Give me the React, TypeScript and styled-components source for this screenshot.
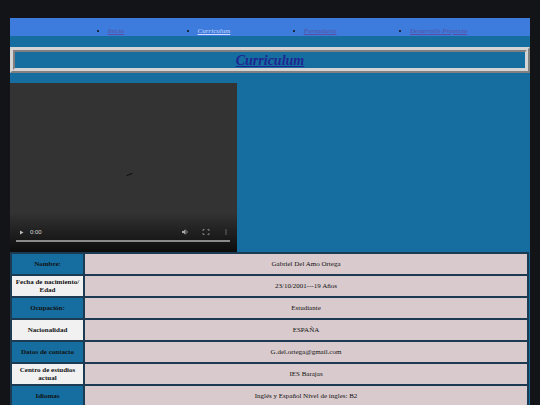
import styled, { createGlobalStyle } from "styled-components"

const GlobalStyle = createGlobalStyle`
    html, body {
        margin: 0;
        padding: 0;
        background: #131417;
        font-family: "Liberation Serif", "Times New Roman", serif;
    }
    body {
        padding: 18px 10px 0 10px;
    }
`

const Page = styled.div`
    width: 520px;
    background: #166ea0;
`

const Nav = styled.ul`
    display: flex;
    justify-content: space-around;
    margin: 0;
    padding: 10px 26px 0 61px;
    height: 18px;
    box-sizing: border-box;
    background: #3d7bdc;
    font-size: 7px;
    line-height: 7px;
    li {
        list-style: disc;
        color: #111;
    }
`

const NavLink = styled.a<{ $current?: boolean }>`
    font-style: italic;
    text-decoration: underline;
    color: ${(p) => (p.$current ? "#cfdcff" : "#5b4f9c")};
`

const TitleBox = styled.div`
    margin: 11px 0 10px 0;
    border: 5px ridge #d4d4d4;
    background: #166ea0;
    text-align: center;
    height: 16px;
    line-height: 16px;
`

const Title = styled.a`
    font-size: 14px;
    font-weight: bold;
    font-style: italic;
    text-decoration: underline;
    color: #1e2590;
`

const Video = styled.div`
    position: relative;
    width: 227px;
    height: 169px;
    background: #333333;
`

const Controls = styled.div`
    position: absolute;
    left: 0;
    right: 0;
    bottom: 0;
    height: 40px;
    background: linear-gradient(180deg, rgba(0, 0, 0, 0) 0%, rgba(0, 0, 0, 0.75) 100%);
`

const ControlRow = styled.div`
    display: flex;
    align-items: center;
    gap: 6px;
    padding: 17px 8px 0 9px;
    color: #d8d8d8;
    font-family: "Liberation Sans", Arial, sans-serif;
    font-size: 6px;
    line-height: 6px;
    svg {
        display: block;
    }
`

const Spacer = styled.div`
    flex: 1;
`

const Progress = styled.div`
    margin: 5px 7px 0 6px;
    height: 2px;
    background: #8a8a8a;
`

const Spinner = styled.svg`
    position: absolute;
    left: 116px;
    top: 90px;
`

const Table = styled.table`
    width: 519px;
    border-collapse: collapse;
    font-size: 7px;
    color: #111;
`

const Label = styled.th<{ $light?: boolean }>`
    width: 73px;
    height: 20px;
    padding: 0 2px;
    box-sizing: border-box;
    border: 2px solid #1c3a52;
    background: ${(p) => (p.$light ? "#f1f1f1" : "#166ea0")};
    font-weight: bold;
    line-height: 8px;
    text-align: center;
`

const Value = styled.td`
    height: 20px;
    padding: 0;
    border: 2px solid #1c3a52;
    background: #d9cbcd;
    text-align: center;
`

const rows = [
    { label: "Nombre:", value: "Gabriel Del Amo Ortega", light: false },
    { label: "Fecha de nacimiento/ Edad", value: "23/10/2001---19 Años", light: true },
    { label: "Ocupación:", value: "Estudiante", light: false },
    { label: "Nacionalidad", value: "ESPAÑA", light: true },
    { label: "Datos de contacto", value: "G.del.ortega@gmail.com", light: false },
    { label: "Centro de estudios actual", value: "IES Barajas", light: true },
    { label: "Idiomas", value: "Inglés y Español Nivel de ingles: B2", light: false },
]

const App = () => {
    return (
        <>
            <GlobalStyle />
            <Page>
                <Nav>
                    <li><NavLink href="#">Inicio</NavLink></li>
                    <li><NavLink href="#" $current>Curriculum</NavLink></li>
                    <li><NavLink href="#">Formulario</NavLink></li>
                    <li><NavLink href="#">Desarrollo Proyecto</NavLink></li>
                </Nav>
                <TitleBox>
                    <Title href="#">Curriculum</Title>
                </TitleBox>
                <Video>
                    <Spinner width="7" height="3" viewBox="0 0 7 3">
                        <path d="M1 2.4 L6 0.6" stroke="#111" strokeWidth="1.1" strokeLinecap="round" />
                    </Spinner>
                    <Controls>
                        <ControlRow>
                            <svg width="5" height="5" viewBox="0 0 5 5">
                                <path d="M1 0.5 L4.5 2.5 L1 4.5 Z" fill="#bbb" />
                            </svg>
                            <span>0:00</span>
                            <Spacer />
                            <svg width="7" height="6" viewBox="0 0 7 6">
                                <path d="M0 2 H1.5 L3.5 0.3 V5.7 L1.5 4 H0 Z" fill="#aaa" />
                                <path d="M4.5 1.5 Q6 3 4.5 4.5" stroke="#aaa" strokeWidth="0.8" fill="none" />
                            </svg>
                            <svg width="14" height="6" viewBox="0 0 14 6" style={{ marginLeft: 4 }}>
                                <path d="M4 2 V0.5 H5.5 M8.5 0.5 H10 V2 M10 4 V5.5 H8.5 M5.5 5.5 H4 V4" stroke="#aaa" strokeWidth="0.7" fill="none" />
                            </svg>
                            <svg width="6" height="6" viewBox="0 0 6 6" style={{ marginLeft: 4 }}>
                                <circle cx="3" cy="1" r="0.55" fill="#bbb" />
                                <circle cx="3" cy="3" r="0.55" fill="#bbb" />
                                <circle cx="3" cy="5" r="0.55" fill="#bbb" />
                            </svg>
                        </ControlRow>
                        <Progress />
                    </Controls>
                </Video>
                <Table>
                    <tbody>
                        {rows.map((r) => (
                            <tr key={r.label}>
                                <Label $light={r.light}>{r.label}</Label>
                                <Value>{r.value}</Value>
                            </tr>
                        ))}
                    </tbody>
                </Table>
            </Page>
        </>
    )
}

export default App
